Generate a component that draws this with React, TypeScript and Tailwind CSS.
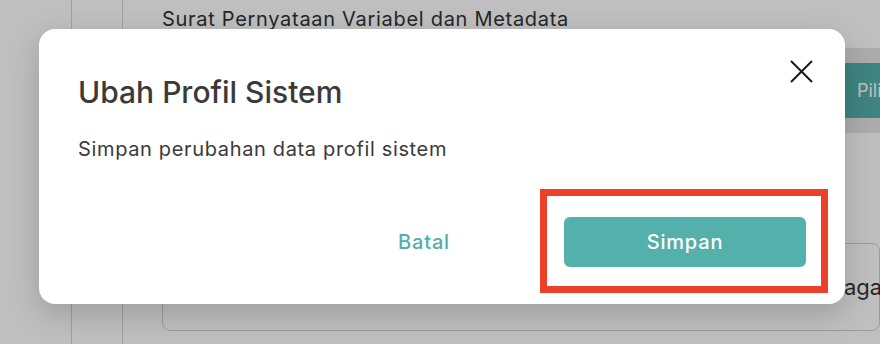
export default function App() {
  return (
    <div className="relative h-[344px] w-[880px] overflow-hidden bg-white font-['Inter',sans-serif] text-[#333]">
      {/* page behind the dialog */}
      <div className="flex h-full">
        <div className="w-[72px] shrink-0 border-r border-[#d4d4d4]" />
        <div className="w-[51px] shrink-0 border-r border-[#d4d4d4]" />
        <div className="flex min-w-0 flex-1 flex-col">
          <div className="pl-[39px] pt-[6px] text-[20px] leading-[26px] tracking-[0.7px] text-[#333]">
            Surat Pernyataan Variabel dan Metadata
          </div>
          <div className="mt-[16px] flex h-[85px] items-center justify-end bg-[#e6e6e6] pl-[39px]">
            <div className="flex h-[55px] w-[45px] items-center bg-[#54b0ab] pl-[22px] text-[18px] whitespace-nowrap text-white">
              Pili
            </div>
          </div>
          <div className="ml-[39px] mt-[110px] flex h-[88px] items-center justify-end rounded-[8px] border border-[#cfcfcf] text-[22px] text-[#333]">
            <span className="w-[35px] whitespace-nowrap">aga</span>
          </div>
        </div>
      </div>

      {/* overlay + dialog */}
      <div className="absolute inset-0 bg-black/25">
        <div className="pl-[39px] pt-[29px]">
          <div className="relative flex h-[275px] w-[806px] flex-col rounded-[16px] bg-white px-[39px] shadow-[0_10px_30px_rgba(0,0,0,0.18)]">
            <button className="absolute right-[32px] top-[31px] flex h-[23px] w-[23px] items-center justify-center">
              <svg width="23" height="23" viewBox="0 0 23 23" fill="none">
                <path d="M1 1L22 22M22 1L1 22" stroke="#1a1a1a" strokeWidth="2" />
              </svg>
            </button>
            <h2 className="pt-[45px] text-[30px] font-medium leading-[36px] text-[#3a3a3a]">
              Ubah Profil Sistem
            </h2>
            <p className="mt-[25px] text-[20px] leading-[28px] tracking-[0.65px] text-[#3a3a3a]">
              Simpan perubahan data profil sistem
            </p>
            <div className="mt-[54px] flex justify-end gap-[19px]">
              <button className="h-[50px] w-[242px] text-[20px] font-medium tracking-[0.8px] text-[#52b0aa]">
                Batal
              </button>
              <div className="relative">
                <button className="h-[50px] w-[242px] rounded-[6px] bg-[#54b0ab] text-[20px] font-medium tracking-[0.8px] text-white">
                  Simpan
                </button>
                <div className="pointer-events-none absolute -bottom-[26px] -left-[24px] -right-[22px] -top-[28px] border-[7px] border-[#ea4128]" />
              </div>
            </div>
          </div>
        </div>
      </div>
    </div>
  );
}
